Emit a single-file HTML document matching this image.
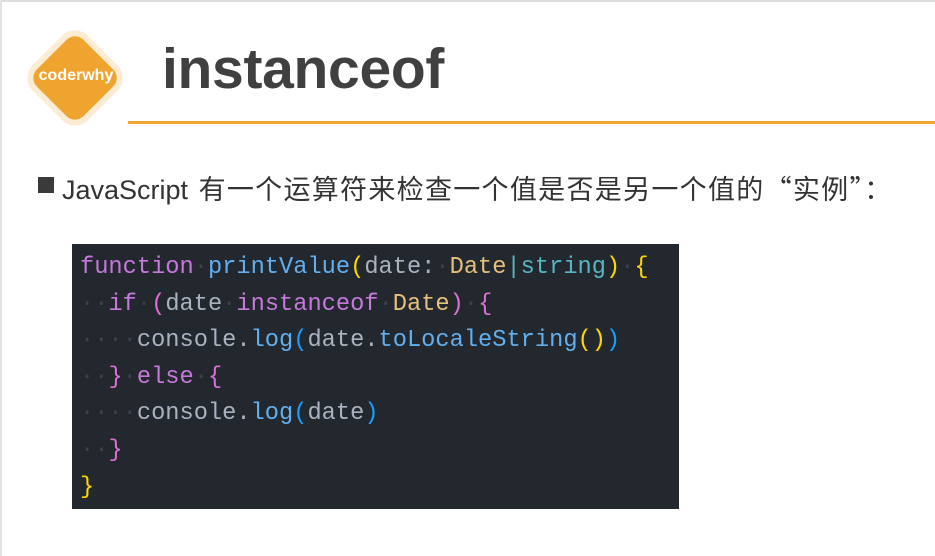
<!DOCTYPE html>
<html><head><meta charset="utf-8"><style>
html,body{margin:0;padding:0}
body{width:935px;height:556px;background:#fff;position:relative;overflow:hidden}
.tb{position:absolute;left:0;top:0;width:935px;height:2px;background:#ddd}
.lb{position:absolute;left:0;top:0;width:2px;height:556px;background:#e2e2e2}
.logo{position:absolute;left:42px;top:45px;width:66px;height:66px;background:#f0a430;border-radius:12px;transform:rotate(45deg);box-shadow:0 0 0 6px #fdecd4}
.lt{position:absolute;left:26px;top:67px;width:100px;text-align:center;color:#fff;font:bold 16px "Liberation Sans",sans-serif}
.title{position:absolute;left:162px;top:36px;font:bold 57px "Liberation Sans",sans-serif;color:#404040;letter-spacing:-0.3px}
.line{position:absolute;left:128px;top:121px;width:807px;height:3px;background:#f0a430}
.sq{position:absolute;left:38px;top:177px;width:16px;height:16px;background:#3a3a3a}
.bt{position:absolute;left:62px;top:168px;font:27px "Liberation Sans","Noto Sans CJK SC",sans-serif;color:#333;white-space:nowrap}
.cn{letter-spacing:1.3px;margin-left:3px}
.cj{font-family:"Noto Sans CJK SC",sans-serif}
.code{position:absolute;left:72px;top:244px;width:607px;height:265px;background:#23272e}
pre{margin:0;position:absolute;left:8px;top:6px;font:23.7px/36.6px "Liberation Mono","DejaVu Sans Mono",monospace;color:#abb2bf}
.k{color:#c678dd}.f{color:#61afef}.t{color:#e5c07b}.s{color:#56b6c2}.y{color:#ffd700}.p{color:#da70d6}.b{color:#179fff}.d{color:#3c414b}
</style></head><body>
<div class="tb"></div><div class="lb"></div>
<div class="logo"></div><div class="lt">coderwhy</div>
<div class="title">instanceof</div>
<div class="line"></div>
<div class="sq"></div>
<div class="bt">JavaScript <span class="cn">有一个运算符来检查一个值是否是另一个值的<span class="cj">“实例”：</span></span></div>
<div class="code"><pre><span class="k">function</span><span class="d">·</span><span class="f">printValue</span><span class="y">(</span>date:<span class="d">·</span><span class="t">Date</span><span class="s">|string</span><span class="y">)</span><span class="d">·</span><span class="y">{</span>
<span class="d">··</span><span class="k">if</span><span class="d">·</span><span class="p">(</span>date<span class="d">·</span><span class="k">instanceof</span><span class="d">·</span><span class="t">Date</span><span class="p">)</span><span class="d">·</span><span class="p">{</span>
<span class="d">····</span>console.<span class="f">log</span><span class="b">(</span>date.<span class="f">toLocaleString</span><span class="y">()</span><span class="b">)</span>
<span class="d">··</span><span class="p">}</span><span class="d">·</span><span class="k">else</span><span class="d">·</span><span class="p">{</span>
<span class="d">····</span>console.<span class="f">log</span><span class="b">(</span>date<span class="b">)</span>
<span class="d">··</span><span class="p">}</span>
<span class="y">}</span></pre></div>
</body></html>
